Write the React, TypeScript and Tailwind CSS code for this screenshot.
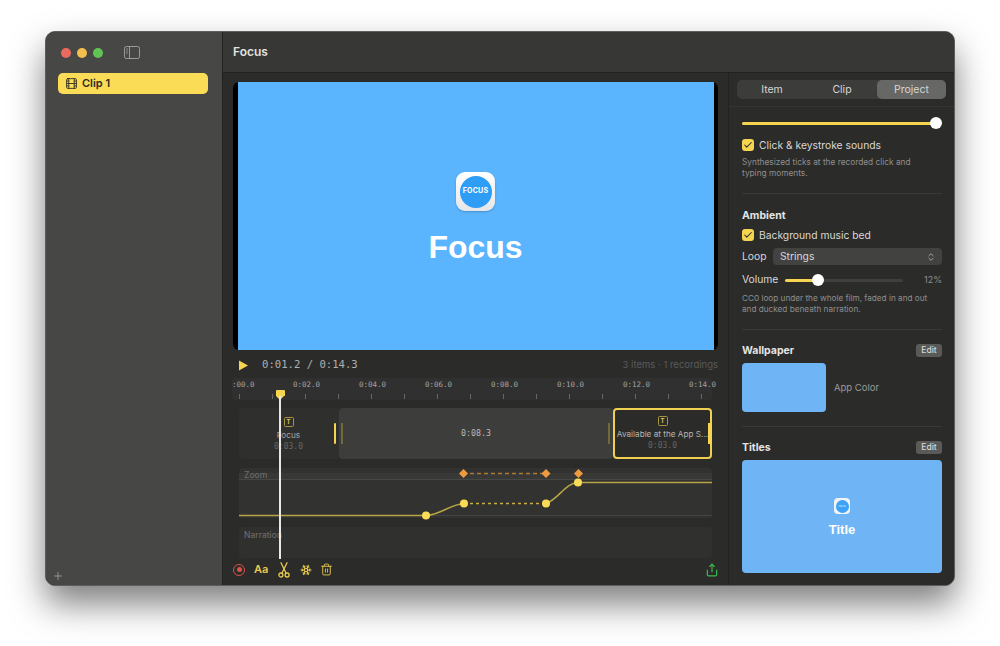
import { ChevronsUpDown, Check, Trash2, Share, Snowflake, Plus, Film } from "lucide-react";

const rulerLabels = [":00.0", "0:02.0", "0:04.0", "0:06.0", "0:08.0", "0:10.0", "0:12.0", "0:14.0"];
const mono = "font-['DejaVu_Sans_Mono',monospace]";

function AppIcon({ small }: { small?: boolean }) {
  if (small) {
    return (
      <div className="flex h-4 w-4 items-center justify-center rounded-[4px] bg-[#f1f3f5]">
        <div className="flex h-[13px] w-[13px] items-center justify-center rounded-full bg-[#3ea2f7] text-[2px] font-bold text-[#cfe6fb]">FOCUS</div>
      </div>
    );
  }
  return (
    <div className="flex h-[39px] w-[39px] items-center justify-center rounded-[9px] bg-gradient-to-b from-white to-[#e4e6e8] shadow-[0_1px_2px_rgba(0,0,0,0.2)]">
      <div className="flex h-[32px] w-[32px] items-center justify-center rounded-full bg-[#2d9df6] text-[7px] font-bold tracking-[0.2px] text-white">FOCUS</div>
    </div>
  );
}

function CheckBox() {
  return (
    <div className="flex h-3 w-3 items-center justify-center rounded-[3px] bg-[#f5d54f]">
      <Check size={10} strokeWidth={2.5} className="text-[#2b2b2a]" />
    </div>
  );
}

function Divider() {
  return <div className="h-px bg-[#3a3a39]" />;
}

function EditButton() {
  return <div className="flex h-[13px] w-[26px] items-center justify-center rounded-[3px] bg-[#5a5a59] text-[8.5px] font-medium text-[#d8d8d8]">Edit</div>;
}

function Sidebar() {
  return (
    <div className="flex w-[177px] shrink-0 flex-col border-r border-[#222221] bg-[#474746] pl-[12px] pr-[14px]">
      <div className="flex h-[41px] shrink-0 items-center pl-[3px]">
        <div className="flex gap-[6px]">
          <div className="h-[10px] w-[10px] rounded-full bg-[#ec6a5e]" />
          <div className="h-[10px] w-[10px] rounded-full bg-[#f4bf4f]" />
          <div className="h-[10px] w-[10px] rounded-full bg-[#61c554]" />
        </div>
        <svg width="16" height="13" viewBox="0 0 16 13" fill="none" stroke="#9b9b9a" strokeWidth="1" className="ml-[21px]">
          <rect x="0.5" y="0.5" width="15" height="12" rx="2" />
          <path d="M5.5 0.5v12" />
          <path d="M2.2 3h1.6M2.2 5h1.6M2.2 7h1.6" />
        </svg>
      </div>
      <div className="flex h-[21px] items-center gap-[4px] rounded-[5px] bg-[#fbdc56] pl-[7px] text-[11px] font-semibold text-[#2c2a1c]">
        <Film size={13} strokeWidth={1.6} />
        Clip 1
      </div>
      <div className="mt-auto mb-[3px] h-[12px] -ml-[6px]">
        <Plus size={12} strokeWidth={1.5} className="text-[#a8a8a7]" />
      </div>
    </div>
  );
}

function Ruler() {
  return (
    <div className="ml-[9px] h-[22px] w-[480px] rounded-[3px] bg-[#303030]">
      <div className={`flex pt-[2px] text-[7.5px] leading-[10px] text-[#a3a3a2] ${mono}`}>
        {rulerLabels.map((t, i) => (
          <div key={t} className={i === 0 ? "w-[51px] shrink-0" : i === 7 ? "w-[40px] shrink-0 pl-[10px]" : "w-[66px] shrink-0 pl-[10px]"}>
            {t}
          </div>
        ))}
      </div>
      <div className="mt-[4px] flex pl-[7px]">
        {Array.from({ length: 15 }).map((_, i) => (
          <div key={i} className="h-[5px] w-[33px] shrink-0">
            <div className="h-full w-px bg-[#666665]" />
          </div>
        ))}
      </div>
    </div>
  );
}

function ClipGlyph() {
  return (
    <div className="flex h-[10px] w-[10px] items-center justify-center rounded-[1.5px] border border-[#a8943d] text-[6px] font-bold leading-none text-[#d8c25a]">T</div>
  );
}

function Clips() {
  return (
    <div className="ml-[16px] mt-[8px] flex h-[51px] w-[473px]">
      <div className="relative flex w-[100px] shrink-0 flex-col items-center rounded-l-[4px] bg-[#2f2f2e] pt-[9px] pr-[1px]">
        <ClipGlyph />
        <div className="mt-[3px] text-[8.2px] leading-[10px] text-[#a5a5a4]">Focus</div>
        <div className={`mt-[2px] text-[8px] leading-[10px] text-[#666665] ${mono}`}>0:03.0</div>
        <div className="absolute right-[3px] top-[15px] h-[21px] w-[2px] rounded-[1px] bg-[#f5d54f]" />
      </div>
      <div className="relative flex flex-1 items-center justify-center rounded-[4px] bg-[#3d3d3c]">
        <span className={`text-[8.3px] text-[#bcbcbb] ${mono}`}>0:08.3</span>
        <div className="absolute left-[2px] top-[15px] h-[21px] w-[2px] bg-[#736a39]" />
        <div className="absolute right-[3px] top-[15px] h-[21px] w-[2px] bg-[#736a39]" />
      </div>
      <div className="relative flex w-[99px] shrink-0 flex-col items-center rounded-[4px] border-2 border-[#f0d050] bg-[#2b2b2a] pt-[6px]">
        <ClipGlyph />
        <div className="mt-[3px] w-[95px] shrink-0 overflow-hidden whitespace-nowrap text-center text-[8.2px] leading-[10px] text-[#b5b5b4]">Available at the App S...</div>
        <div className={`mt-[2px] text-[8px] leading-[10px] text-[#666665] ${mono}`}>0:03.0</div>
        <div className="absolute -right-[2px] top-[13px] h-[21px] w-[4px] bg-[#f5d54f]" />
      </div>
    </div>
  );
}

function ZoomLane() {
  return (
    <div className="relative ml-[16px] mt-[9px] h-[50px] w-[473px] rounded-[4px] bg-[#323231]">
      <svg width="473" height="50" className="absolute left-0 top-0 overflow-visible">
        <rect x="0" y="5" width="473" height="6" fill="#383837" />
        <line x1="0" y1="11.5" x2="473" y2="11.5" stroke="#474746" />
        <line x1="0" y1="47.5" x2="473" y2="47.5" stroke="#444443" />
        <path d="M224 5.5H307" stroke="#b07a35" strokeWidth="1.3" strokeDasharray="4 3" />
        <path d="M0 47.5H187C200 47.5 212 36 225 35.5" fill="none" stroke="#b8a545" strokeWidth="1.5" />
        <path d="M225 35.5H307" stroke="#c8ad45" strokeWidth="1.5" strokeDasharray="3 3" />
        <path d="M307 35.5C320 31 326 15 339 14.5H473" fill="none" stroke="#b8a545" strokeWidth="1.5" />
        <circle cx="187" cy="47.5" r="4" fill="#fbdc56" />
        <circle cx="225" cy="35.5" r="4" fill="#fbdc56" />
        <circle cx="307" cy="35.5" r="4" fill="#fbdc56" />
        <circle cx="339" cy="14.5" r="4" fill="#fbdc56" />
        {[224.5, 307, 339.5].map((x) => (
          <rect key={x} x={x - 3.2} y="2.3" width="6.4" height="6.4" fill="#ee9a3e" transform={`rotate(45 ${x} 5.5)`} />
        ))}
      </svg>
      <span className="absolute left-[5px] top-[1px] text-[8.5px] font-medium leading-[12px] text-[#6b6b6a]">Zoom</span>
    </div>
  );
}

function ScissorsIcon() {
  return (
    <svg width="12" height="16" viewBox="0 0 12 16" fill="none" stroke="#e8c94d" strokeWidth="1.3" strokeLinecap="round" className="ml-[10px]">
      <circle cx="2.9" cy="13" r="2" />
      <circle cx="9.1" cy="13" r="2" />
      <path d="M3.9 11.2L9 0.8" />
      <path d="M8.1 11.2L3 0.8" />
    </svg>
  );
}

function Toolbar() {
  return (
    <div className="mt-[1px] flex h-[21px] items-center pl-[10px] pr-[9px] text-[#e8c94d]">
      <div className="flex h-[12px] w-[12px] items-center justify-center rounded-full border-[1.5px] border-[#d9534a]">
        <div className="h-[5px] w-[5px] rounded-full bg-[#d9534a]" />
      </div>
      <span className="ml-[9px] text-[11px] font-semibold">Aa</span>
      <ScissorsIcon />
      <Snowflake size={12} strokeWidth={2.25} className="ml-[10px]" />
      <Trash2 size={13} strokeWidth={1.7} className="ml-[8px]" />
      <Share size={14} strokeWidth={2} className="ml-auto text-[#3dbb4c]" />
    </div>
  );
}

function Center() {
  return (
    <div className="relative flex w-[506px] shrink-0 flex-col border-r border-[#222221] bg-[#2b2b2a]">
      <div className="mx-[10px] mt-[9px] flex h-[268px] justify-center rounded-[6px] bg-black">
        <div className="flex w-[476px] flex-col items-center bg-[#5ab4fe] pt-[90px]">
          <AppIcon />
          <div className="mt-[17px] text-[32px] font-bold leading-[38px] text-white font-['Liberation_Sans',sans-serif]">Focus</div>
        </div>
      </div>
      <div className="flex h-[28px] shrink-0 items-center pl-[16px] pr-[10px] pt-[2px]">
        <svg width="9" height="11" viewBox="0 0 9 11">
          <path d="M0 0.4L9 5.5L0 10.6Z" fill="#f5d54f" />
        </svg>
        <span className={`ml-[14px] text-[10.6px] text-[#b0b0af] ${mono}`}>0:01.2 / 0:14.3</span>
        <span className="ml-auto text-[9.5px] text-[#5a5a59]">3 items · 1 recordings</span>
      </div>
      <Ruler />
      <Clips />
      <ZoomLane />
      <div className="ml-[16px] mt-[9px] h-[31px] w-[473px] rounded-[4px] bg-[#30302f] pl-[5px] pt-[2px] text-[8.5px] font-medium leading-[12px] text-[#6b6b6a]">Narration</div>
      <Toolbar />
      {/* playhead */}
      <div className="absolute left-[52.5px] top-[317px] flex flex-col items-center">
        <div className="h-[6px] w-[9px] rounded-t-[1px] bg-[#f5d54f]" />
        <div className="h-0 w-0 border-x-[4.5px] border-t-[4px] border-x-transparent border-t-[#f5d54f]" />
        <div className="-mt-[4px] h-[163px] w-[1.5px] bg-[#e8e8e8]" />
      </div>
    </div>
  );
}

function Slider({ pct, width }: { pct: number; width: number }) {
  return (
    <div className="relative h-[12px]" style={{ width }}>
      <div className="absolute left-0 right-0 top-[5px] h-[3px] rounded-full bg-[#3f3f3e]" />
      <div className="absolute left-0 top-[5px] h-[3px] rounded-full bg-[#f5d54f]" style={{ width: `${pct}%` }} />
      <div className="absolute top-0 h-[12px] w-[12px] -translate-x-1/2 rounded-full bg-white" style={{ left: `${pct}%` }} />
    </div>
  );
}

function Inspector() {
  return (
    <div className="flex flex-1 flex-col bg-[#2b2b2a] text-[10.3px] text-[#d8d8d7]">
      <div className="flex h-[34px] items-start border-b border-[#353534] pl-[8px] pt-[7px]">
        <div className="flex h-[19px] w-[209px] rounded-[5px] bg-[#3c3c3b] text-[10.5px] text-[#d6d6d5]">
          <div className="flex w-[70px] items-center justify-center">Item</div>
          <div className="flex w-[70px] items-center justify-center">Clip</div>
          <div className="flex w-[69px] items-center justify-center rounded-[5px] bg-[#676766]">Project</div>
        </div>
      </div>
      <div className="flex flex-col pl-[13px] pr-[12px]">
        <div className="mt-[10px]">
          <Slider pct={100} width={194} />
        </div>
        <div className="mt-[9px] flex items-center gap-[5px] leading-[14px]">
          <CheckBox />
          Click &amp; keystroke sounds
        </div>
        <p className="mt-[5px] text-[8.3px] leading-[11px] text-[#8f8f8e]">
          Synthesized ticks at the recorded click and
          <br />
          typing moments.
        </p>
        <div className="mt-[14px]"><Divider /></div>
        <div className="mt-[15px] text-[10.5px] font-bold leading-[14px] text-[#e4e4e3]">Ambient</div>
        <div className="mt-[5px] flex items-center gap-[5px] leading-[14px]">
          <CheckBox />
          Background music bed
        </div>
        <div className="mt-[6px] flex h-[17px] items-center">
          <span className="w-[31px]">Loop</span>
          <div className="flex h-[17px] flex-1 items-center justify-between rounded-[4px] bg-[#424241] pl-[7px] pr-[6px]">
            Strings
            <ChevronsUpDown size={10} className="text-[#b8b8b7]" />
          </div>
        </div>
        <div className="mt-[8px] flex h-[14px] items-center">
          <span className="w-[43px]">Volume</span>
          <Slider pct={28} width={118} />
          <span className="ml-auto text-[9px] text-[#8f8f8e]">12%</span>
        </div>
        <p className="mt-[6px] text-[8.2px] leading-[11px] text-[#8f8f8e]">
          CC0 loop under the whole film, faded in and out
          <br />
          and ducked beneath narration.
        </p>
        <div className="mt-[14px]"><Divider /></div>
        <div className="mt-[14px] flex h-[13px] items-center justify-between">
          <span className="text-[10.5px] font-bold text-[#e4e4e3]">Wallpaper</span>
          <EditButton />
        </div>
        <div className="mt-[6px] flex items-center gap-[8px]">
          <div className="h-[49px] w-[84px] rounded-[4px] bg-[#6fb4f5]" />
          <span className="pt-[1px] text-[9.5px] text-[#9a9a99]">App Color</span>
        </div>
        <div className="mt-[14px]"><Divider /></div>
        <div className="mt-[14px] flex h-[13px] items-center justify-between">
          <span className="text-[10.5px] font-bold text-[#e4e4e3]">Titles</span>
          <EditButton />
        </div>
        <div className="mt-[6px] flex h-[113px] flex-col items-center rounded-[4px] bg-[#6fb4f5] pt-[38px]">
          <AppIcon small />
          <div className="mt-[8px] text-[13px] font-bold leading-[16px] text-white font-['Liberation_Sans',sans-serif]">Title</div>
        </div>
      </div>
    </div>
  );
}

export default function App() {
  return (
    <div className="h-[646px] w-[1000px] overflow-hidden bg-white pl-[45px] pt-[31px] font-['Inter',sans-serif]">
      <div className="flex h-[555px] w-[910px] overflow-hidden rounded-[10px] border border-[#5d5d5c] bg-[#2b2b2a] shadow-[0_18px_34px_rgba(0,0,0,0.5)]">
        <Sidebar />
        <div className="flex flex-1 flex-col">
          <div className="flex h-[41px] shrink-0 items-center border-b border-[#222221] bg-[#373736] pl-[10px] text-[12px] font-semibold text-[#e2e2e1]">Focus</div>
          <div className="flex flex-1">
            <Center />
            <Inspector />
          </div>
        </div>
      </div>
    </div>
  );
}
